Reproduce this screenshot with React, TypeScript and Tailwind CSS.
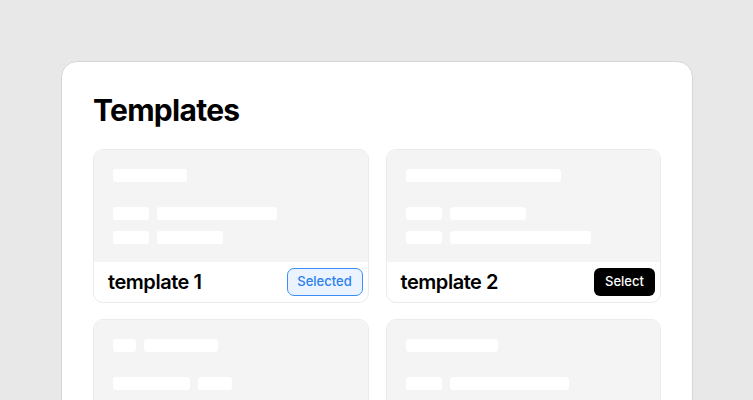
const templates = [
  {
    name: 'template 1',
    selected: true,
    rows: [[74], [36, 120], [36, 66]],
  },
  {
    name: 'template 2',
    selected: false,
    rows: [[155], [36, 76], [36, 141]],
  },
  {
    name: 'template 3',
    selected: false,
    rows: [[23, 74], [77, 34], [36, 90]],
  },
  {
    name: 'template 4',
    selected: false,
    rows: [[92], [36, 119], [36, 70]],
  },
]

function Bars({ widths }: { widths: number[] }) {
  return (
    <div className="flex gap-2">
      {widths.map((w, i) => (
        <div key={i} className="h-[13px] rounded-[3px] bg-white" style={{ width: w }} />
      ))}
    </div>
  )
}

export default function App() {
  return (
    <div
      className="h-[400px] w-[753px] overflow-hidden bg-[#e8e8e8] pl-[61px] pt-[61px]"
      style={{ fontFamily: 'Inter, "Noto Sans", sans-serif' }}
    >
      <div className="w-[632px] rounded-t-[16px] border border-[#d6d6d6] bg-white px-[31px] pt-[28px] pb-8">
        <h1 className="mb-[19px] text-[30px] font-bold leading-10 tracking-[-0.7px] text-black">Templates</h1>

        {/* Grid of template cards */}
        <div className="grid grid-cols-2 gap-x-[17px] gap-y-[16px]">
          {templates.map((t) => (
            <div key={t.name} className="overflow-hidden rounded-[10px] border border-[#ebebeb] bg-white">
              <div className="flex h-[112px] flex-col bg-[#f4f4f4] px-[19px] pt-[19px]">
                <Bars widths={t.rows[0]} />
                <div className="mt-[25px] flex flex-col gap-[11px]">
                  <Bars widths={t.rows[1]} />
                  <Bars widths={t.rows[2]} />
                </div>
              </div>
              <div className="flex h-[40px] items-center justify-between pl-[14px] pr-[5px]">
                <span className="text-[20px] font-semibold tracking-[-0.45px] text-black">{t.name}</span>
                {t.selected ? (
                  <button className="flex h-[28px] w-[76px] items-center justify-center rounded-[7px] border-[1.5px] border-[#3b8ef3] bg-[#eaf3ff] text-[13px] font-medium text-[#2b7fee]">
                    Selected
                  </button>
                ) : (
                  <button className="flex h-[28px] w-[61px] items-center justify-center rounded-[6px] bg-black text-[13px] font-medium text-white">
                    Select
                  </button>
                )}
              </div>
            </div>
          ))}
        </div>
      </div>
    </div>
  )
}
